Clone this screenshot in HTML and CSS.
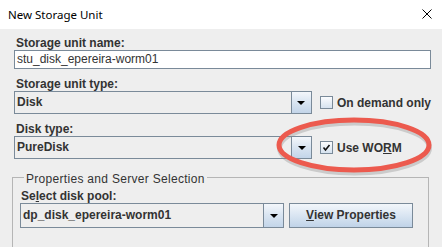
FILE: index.html
```html
<!DOCTYPE html>
<html>
<head>
<meta charset="utf-8">
<link rel="stylesheet" href="styles.css">
</head>
<body>
<div class="window">
  <div class="titlebar">
    <span class="title">New Storage Unit</span>
    <svg class="close" width="10" height="10" viewBox="0 0 10 10"><path d="M0.5 0.5 L9.5 9.5 M9.5 0.5 L0.5 9.5" stroke="#000" stroke-width="1" fill="none"/></svg>
  </div>
  <div class="content">
    <div class="label">Storage unit name:</div>
    <div class="textfield">stu_disk_epereira-worm01</div>

    <div class="label gap">Storage unit type:</div>
    <div class="row">
      <div class="combo wide">
        <span class="combo-value">Disk</span>
        <span class="combo-btn"><span class="arrow"></span></span>
      </div>
      <div class="check"><span class="box"></span><span>On demand only</span></div>
    </div>

    <div class="label gap">Disk type:</div>
    <div class="row">
      <div class="combo wide">
        <span class="combo-value">PureDisk</span>
        <span class="combo-btn"><span class="arrow"></span></span>
      </div>
      <div class="check"><span class="box"><svg width="11" height="11" viewBox="0 0 11 11"><path d="M2.5 5.5 L4.5 8 L8.5 3" stroke="#111" stroke-width="1.6" fill="none"/></svg></span><span>Use WO<u>R</u>M</span></div>
    </div>

    <fieldset class="group">
      <legend>Properties and Server Selection</legend>
      <div class="label">Se<u>l</u>ect disk pool:</div>
      <div class="row">
        <div class="combo pool">
          <span class="combo-value">dp_disk_epereira-worm01</span>
          <span class="combo-btn"><span class="arrow"></span></span>
        </div>
        <div class="button"><u>V</u>iew Properties</div>
      </div>
    </fieldset>
  </div>
  <svg class="annotation" width="160" height="62" viewBox="0 0 160 62">
    <ellipse cx="78" cy="29.5" rx="75" ry="25" fill="none" stroke="#8a8a8a" stroke-opacity="0.35" stroke-width="5" transform="translate(0.5 1.5)"/>
    <ellipse cx="78" cy="28" rx="75" ry="25" fill="none" stroke="#ec5a4e" stroke-width="5"/>
  </svg>
</div>
</body>
</html>
```

FILE: styles.css
```css
html, body {
  margin: 0;
  padding: 0;
  background: #eeeeee;
  overflow: hidden;
}

.window {
  position: relative;
  width: 442px;
  height: 247px;
  overflow: hidden;
  font-family: "Liberation Sans", Arial, sans-serif;
  font-size: 12px;
  color: #333333;
}

.titlebar {
  height: 29px;
  background: #ffffff;
  display: flex;
  align-items: center;
  justify-content: space-between;
  padding: 0 10px 0 8px;
}

.title {
  font-family: "Noto Sans", "Open Sans", sans-serif;
  font-size: 11.5px;
  color: #000000;
  margin-top: -1px;
}

.close {
  display: block;
  margin-top: -1px;
}

.content {
  padding: 7px 11px 0 14px;
}

.label {
  font-weight: bold;
  line-height: 14px;
  height: 14px;
  padding-left: 2px;
}

.label.gap {
  margin-top: 8px;
}

.textfield {
  height: 17px;
  line-height: 17px;
  background: #ffffff;
  border: 1px solid #7a8a99;
  padding-left: 2px;
  color: #333333;
}

.row {
  display: flex;
  align-items: center;
}

.combo {
  display: flex;
  height: 21px;
  border: 1px solid #7a8a99;
  background: #eeeeee;
}

.combo.wide {
  width: 296px;
}

.combo-value {
  flex: 1;
  font-weight: bold;
  line-height: 21px;
  padding-left: 2px;
  white-space: nowrap;
  overflow: hidden;
}

.combo-btn {
  width: 19px;
  border-left: 1px solid #7a8a99;
  background: linear-gradient(#f4f7fb, #dbe6f2 45%, #c3d5e9);
  display: flex;
  align-items: center;
  justify-content: center;
}

.arrow {
  width: 0;
  height: 0;
  border-left: 4px solid transparent;
  border-right: 4px solid transparent;
  border-top: 4px solid #000000;
  margin-top: 1px;
}

.check {
  display: flex;
  align-items: center;
  margin-left: 8px;
  font-weight: bold;
}

.box {
  width: 11px;
  height: 11px;
  border: 1px solid #7a8a99;
  background: linear-gradient(#fbfcfe, #d6e2ef);
  margin-right: 4px;
  display: flex;
  align-items: center;
  justify-content: center;
}

.box svg {
  display: block;
}

.group {
  margin: 9px 2px 0 -2px;
  border: 1px solid #b5b5b5;
  padding: 3px 10px 20px 7px;
  min-width: 0;
}

.group legend {
  padding: 4px 2px 0 2px;
  margin-left: 4px;
  line-height: 14px;
  letter-spacing: 0.3px;
  color: #333333;
}

.group .label {
  padding-left: 1px;
}

.combo.pool {
  height: 23px;
  width: 262px;
}

.combo.pool .combo-value {
  line-height: 23px;
}

.button {
  margin-left: 5px;
  width: 122px;
  height: 23px;
  line-height: 23px;
  border: 1px solid #7a8a99;
  background: linear-gradient(#f2f6fa, #dce7f3 45%, #c0d3e8);
  text-align: center;
  font-weight: bold;
}

.annotation {
  position: absolute;
  left: 276px;
  top: 117px;
}
```
